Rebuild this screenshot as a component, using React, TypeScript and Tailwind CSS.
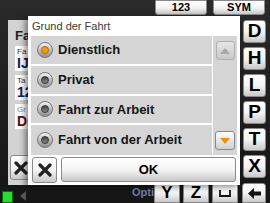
import React from 'react';

const keyCls =
  'flex items-center justify-center rounded-[3px] bg-gradient-to-b from-white via-[#f4f4f4] to-[#c9c9c9] border border-[#8a8a8a] text-black font-bold';

function Radio({ on }: { on?: boolean }) {
  return (
    <span className="w-[16px] h-[16px] rounded-full bg-gradient-to-b from-[#f4f4f4] to-[#8e8e8e] border border-[#777] flex items-center justify-center shrink-0">
      <span
        className={
          on
            ? 'w-[8px] h-[8px] rounded-full bg-[#f29a1a] border border-[#b86a00]'
            : 'w-[8px] h-[8px] rounded-full bg-gradient-to-b from-[#444] to-[#8a8a8a] border border-[#333]'
        }
      />
    </span>
  );
}

function XIcon() {
  return (
    <svg width="14" height="14" viewBox="0 0 14 14">
      <path d="M2 2 L12 12 M12 2 L2 12" stroke="#222" strokeWidth="3.2" strokeLinecap="round" />
    </svg>
  );
}

const options = [
  { label: 'Dienstlich', on: true },
  { label: 'Privat' },
  { label: 'Fahrt zur Arbeit' },
  { label: 'Fahrt von der Arbeit' },
];

export default function App() {
  return (
    <div
      className="relative w-[270px] h-[203px] overflow-hidden bg-gradient-to-b from-[#2a2a2a] to-[#151515]"
      style={{ fontFamily: '"Liberation Sans", Arial, sans-serif' }}
    >
      {/* Top key row */}
      <div className="flex gap-[6px] pl-[155px] h-[16px]">
        <div className={`${keyCls} w-[52px] h-[15px] rounded-t-none text-[11px]`}>123</div>
        <div className={`${keyCls} w-[52px] h-[15px] rounded-t-none text-[11px]`}>SYM</div>
      </div>

      <div className="flex">
        {/* Background form panel */}
        <div className="ml-[8px] mt-[4px] w-[232px] h-[165px] bg-[#d3d3d3] pl-[7px] pt-[9px] flex flex-col">
          <div className="text-[13px] font-bold text-[#222] leading-none">Fahrt</div>
          <div className="mt-[4px] bg-white w-[40px] h-[25px] px-[2px] pt-[1px]">
            <div className="text-[8px] text-[#333] leading-[9px]">Fa</div>
            <div className="text-[14px] font-bold text-[#10205a] leading-[14px]">IJ</div>
          </div>
          <div className="mt-[4px] bg-white w-[40px] h-[25px] px-[2px] pt-[1px]">
            <div className="text-[8px] text-[#333] leading-[9px]">Ta</div>
            <div className="text-[14px] font-bold text-[#10205a] leading-[14px]">12</div>
          </div>
          <div className="mt-[4px] bg-white w-[40px] h-[25px] px-[2px] pt-[1px]">
            <div className="text-[8px] text-[#888] leading-[9px]">Gr</div>
            <div className="text-[14px] font-bold text-[#5a1010] leading-[14px]">Di</div>
          </div>
          <div className={`${keyCls} mt-auto mb-[5px] ml-[-5px] w-[22px] h-[25px]`}>
            <XIcon />
          </div>
        </div>

        {/* Right letter keys */}
        <div className="ml-[3px] mt-[4px] flex flex-col gap-[4px]">
          {['D', 'H', 'L', 'P', 'T', 'X'].map((k) => (
            <div key={k} className={`${keyCls} w-[23px] h-[23px] text-[19px]`}>
              {k}
            </div>
          ))}
        </div>
      </div>

      {/* Bottom row */}
      <div className="flex items-end h-[20px] mt-[-2px]">
        <div className="ml-[2px] w-[11px] h-[12px] bg-[#22e02a] border border-[#0a6a0a]" />
        <span className="ml-[7px] mb-[2px] w-0 h-0 border-y-[5px] border-y-transparent border-r-[6px] border-r-[#555]" />
        <div className="ml-[106px] w-[22px] mb-[5px] text-[11px] font-bold text-[#6b7fae] leading-none">Opti</div>
        <div className="flex gap-[3px]">
          <div className={`${keyCls} w-[26px] h-[20px] rounded-b-none text-[17px] text-[#0a1a6a]`}>Y</div>
          <div className={`${keyCls} w-[26px] h-[20px] rounded-b-none text-[17px]`}>Z</div>
          <div className={`${keyCls} w-[26px] h-[20px] rounded-b-none`}>
            <svg width="12" height="7" viewBox="0 0 12 7">
              <path d="M1 0 L1 6 L11 6 L11 0" stroke="#111" strokeWidth="1.8" fill="none" />
            </svg>
          </div>
          <div className={`${keyCls} ml-[1px] w-[24px] h-[20px] rounded-b-none`}>
            <svg width="13" height="11" viewBox="0 0 13 11">
              <path d="M0 5.5 L6 0 L6 3.5 L13 3.5 L13 7.5 L6 7.5 L6 11 Z" fill="#111" />
            </svg>
          </div>
        </div>
      </div>

      {/* Dialog overlay */}
      <div className="absolute left-[28px] top-[16px] w-[212px] h-[169px] bg-white shadow-[-3px_2px_6px_rgba(0,0,0,0.45)] flex flex-col">
        <div className="h-[20px] flex items-center pl-[4px] text-[11px] text-[#3a3a3a]">Grund der Fahrt</div>
        <div className="mx-[3px] flex h-[119px] bg-[#d5d5d5]">
          <div className="flex-1 flex flex-col">
            {options.map((o, i) => (
              <div
                key={o.label}
                className={`h-[30px] flex items-center gap-[5px] pl-[6px] ${i < 3 ? 'border-b-2 border-white' : ''}`}
              >
                <Radio on={o.on} />
                <span className="text-[13px] font-bold text-[#151515] whitespace-nowrap">{o.label}</span>
              </div>
            ))}
          </div>
          <div className="w-[25px] border-l border-white flex flex-col items-center justify-between py-[5px]">
            <div className="w-[19px] h-[19px] rounded-[3px] bg-gradient-to-b from-[#e6e6e6] to-[#c8c8c8] border border-[#b0b0b0] flex items-center justify-center">
              <svg width="10" height="6" viewBox="0 0 10 6">
                <path d="M0 6 L5 0 L10 6 Z" fill="#a8a8a8" />
              </svg>
            </div>
            <div className="w-[20px] h-[19px] rounded-[3px] bg-gradient-to-b from-white to-[#cfcfcf] border border-[#888] flex items-center justify-center">
              <svg width="10" height="6" viewBox="0 0 10 6">
                <path d="M0 0 L10 0 L5 6 Z" fill="#f0920e" />
              </svg>
            </div>
          </div>
        </div>
        <div className="flex gap-[4px] px-[4px] pt-[2px]">
          <div className={`${keyCls} w-[25px] h-[26px]`}>
            <XIcon />
          </div>
          <div className={`${keyCls} flex-1 h-[25px] text-[13px]`}>OK</div>
        </div>
      </div>
    </div>
  );
}
